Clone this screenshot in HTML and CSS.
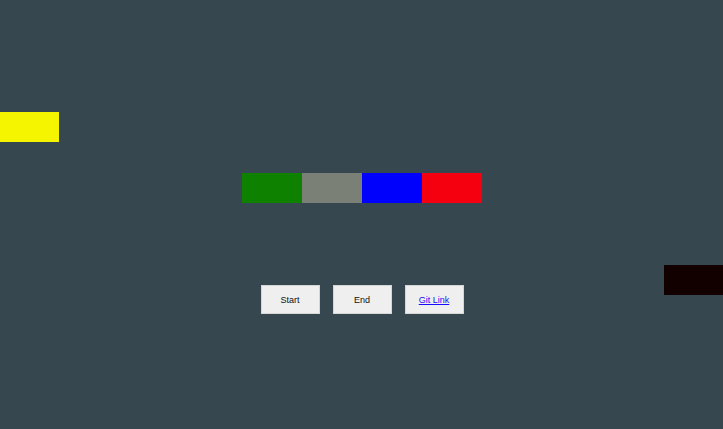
FILE: index.html
```html
<!DOCTYPE html>
<html>
<head>
<meta charset="utf-8">
<link rel="stylesheet" href="styles.css">
</head>
<body>
<div class="stage">
  <div class="mover mover-yellow"></div>
  <div class="mover mover-black"></div>
  <div class="bars">
    <div class="bar bar-green"></div>
    <div class="bar bar-gray"></div>
    <div class="bar bar-blue"></div>
    <div class="bar bar-red"></div>
  </div>
  <div class="controls">
    <button class="btn">Start</button>
    <button class="btn">End</button>
    <button class="btn"><a class="link" href="#">Git Link</a></button>
  </div>
</div>
</body>
</html>
```

FILE: styles.css
```css
html, body {
  margin: 0;
  padding: 0;
  background: #37474f;
  height: 100%;
}
.stage {
  position: relative;
  width: 723px;
  height: 429px;
  display: flex;
  flex-direction: column;
  align-items: center;
  overflow: hidden;
}
.mover {
  position: absolute;
  width: 60px;
  height: 30px;
}
.mover-yellow {
  left: -1px;
  top: 112px;
  background: #f5f500;
}
.mover-black {
  left: 664px;
  top: 265px;
  background: #120000;
}
.bars {
  display: flex;
  margin-top: 173px;
  padding-left: 1px;
}
.bar {
  width: 60px;
  height: 30px;
}
.bar-green { background: #0e8100; }
.bar-gray { background: #7b8077; }
.bar-blue { background: #0000fd; }
.bar-red { background: #f5000e; }
.controls {
  display: flex;
  gap: 13px;
  margin-top: 82px;
  padding-left: 1px;
}
.btn {
  width: 59px;
  height: 29px;
  margin: 0;
  padding: 0;
  background: #efefef;
  border: 1px solid #d6d6d6;
  border-radius: 0;
  font-family: "Liberation Sans", Arial, sans-serif;
  font-size: 9px;
  color: #111;
}
.link {
  color: #1a0dff;
  text-decoration: underline;
}
```
